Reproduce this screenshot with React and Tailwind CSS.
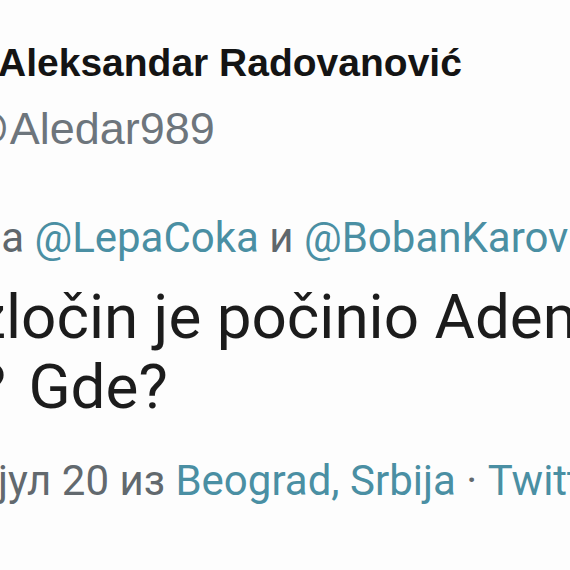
export default function App() {
  return (
    <div className="w-[570px] h-[570px] overflow-hidden bg-[#fdfdfd]">
      {/* Header */}
      <div className="pt-[33px] whitespace-nowrap">
        <div className="h-[60px] leading-[60px] text-[39px] font-bold text-[#141414] ml-[-2px] font-['Liberation_Sans',Arial,sans-serif]">
          Aleksandar Radovanović
        </div>
        <div className="mt-[6px] h-[60px] leading-[60px] text-[45px] text-[#6d757c] ml-[-36px] font-['Liberation_Sans',Arial,sans-serif]">
          @Aledar989
        </div>
      </div>

      {/* Replying to */}
      <div className="mt-[49px] flex h-[60px] leading-[60px] text-[42px] whitespace-nowrap font-['Roboto',sans-serif]">
        <span className="flex justify-end overflow-hidden w-[24px] shrink-0 text-[#5f676c]">
          <span>Одговара</span>
        </span>
        <span className="text-[#4a8fa3]">&nbsp;@LepaCoka</span>
        <span className="text-[#5f676c]">&nbsp;и&nbsp;</span>
        <span className="text-[#4a8fa3]">@BobanKarović</span>
      </div>

      {/* Tweet body */}
      <div className="mt-[14px] text-[62px] text-[#1c1c1c] font-['Roboto',sans-serif] whitespace-nowrap">
        <div className="flex h-[70px] leading-[70px]">
          <span className="flex justify-end overflow-hidden w-[6px] shrink-0">
            <span>Koji z</span>
          </span>
          <span>ločin je počinio Adem Jašari?</span>
        </div>
        <div className="flex h-[70px] leading-[70px]">
          <span className="flex justify-end overflow-hidden w-[6px] shrink-0">
            <span>Kada?</span>
          </span>
          <span className="pl-[7px]">&nbsp;Gde?</span>
        </div>
      </div>

      {/* Meta */}
      <div className="mt-[29px] flex h-[60px] leading-[60px] text-[42px] whitespace-nowrap font-['Roboto',sans-serif]">
        <span className="text-[#62696e] ml-[-2px]">јул 20 из&nbsp;</span>
        <span className="text-[#4a8fa3]">Beograd, Srbija</span>
        <span className="text-[#62696e]">&nbsp;·&nbsp;</span>
        <span className="text-[#4a8fa3]">Twitter for Android</span>
      </div>
    </div>
  );
}
